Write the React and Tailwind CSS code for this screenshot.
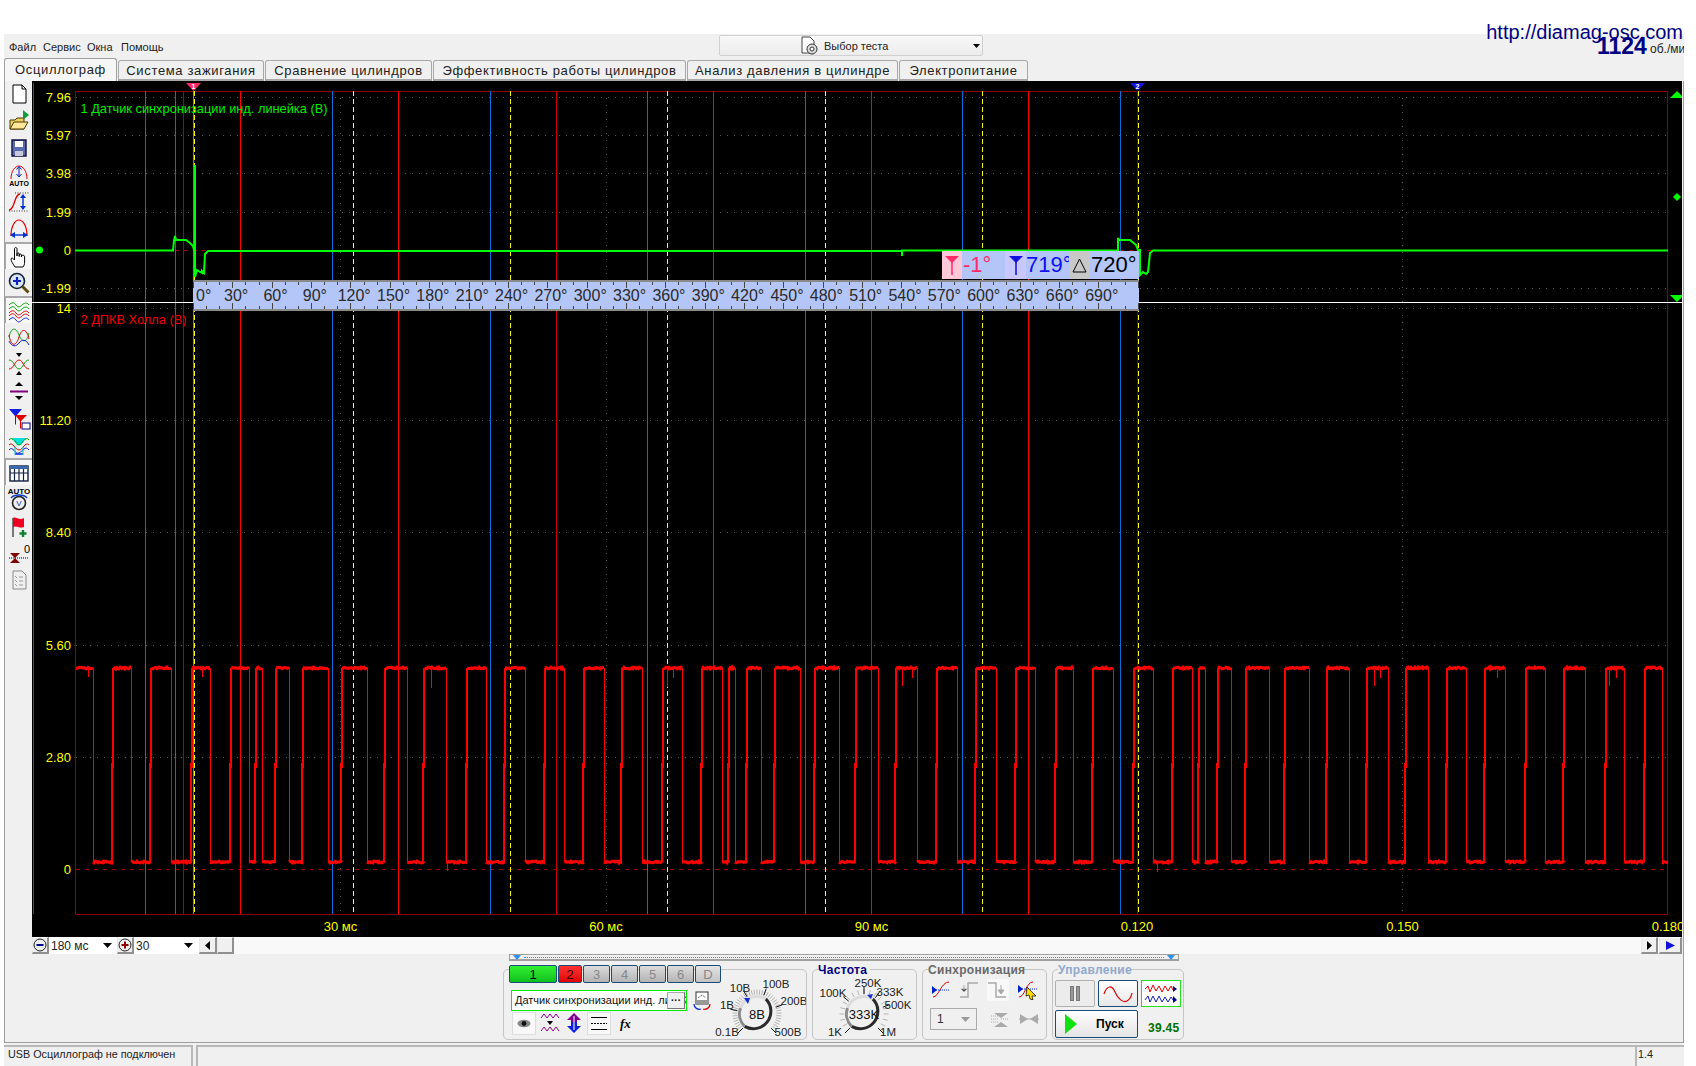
import React from "react";

const rnd = (s) => { const x = Math.sin(s * 12.9898) * 43758.5453; return x - Math.floor(x); };
const EDGES = [92.7,113,131,150.7,170.7,191.7,210,230.7,249,256,262,275.7,288.7,303,328,342,367,385,406.7,424,445.5,466.7,485.7,504.7,524.7,545,563.7,584.3,603.7,622,642.3,663,681.7,702.3,721.7,728.7,734.7,747,760.7,774.7,799.7,814.7,838.7,856,877.7,896,916.7,937,956.7,976,995.6,1016,1035,1056,1073,1093,1112.5,1133.5,1152.5,1172.5,1191.6,1198.6,1204.7,1217.7,1230.7,1245.6,1269.4,1285,1309,1327,1348.5,1367,1387.6,1406,1427.6,1447,1466,1485,1505,1526,1544.5,1563.6,1584.5,1606,1623.6,1644.6,1662].map(Math.round);
const SPIKES = [[88,677],[202,677],[431,688],[667,687],[673,678],[902,686],[912,678],[1374,686],[1380,678],[1497,678],[1609,686],[1616,678]];
const HI = 668, LO = 862;

function redWave() {
  let flat = "", fall = "", rise = "";
  let x0 = 76, high = true;
  const seg = (a, b, base, seed) => {
    let d = `M${a} ${base}`;
    for (let x = a + 1; x <= b; x += 1) d += `L${x} ${(base + (rnd(x + seed) - 0.5) * 1.8).toFixed(1)}`;
    return d;
  };
  EDGES.forEach((e) => {
    flat += seg(x0, e, high ? HI : LO, high ? 3 : 7);
    if (high) fall += `M${e + 0.5} ${HI}V${LO}`;
    else rise += `M${e - 1} ${LO}V${HI + 95}M${e} ${HI + 100}V${HI}`;
    x0 = e; high = !high;
  });
  flat += seg(x0, 1668, LO, 7);
  const sp = SPIKES.map(([x, y]) => `M${x + 0.5} ${HI}V${y}`).join("") + "M447.5 862V871M1157.5 862V872";
  return { flat, fall, rise, sp };
}
const W = redWave();

const GREEN = "M75 250.5H173L174 241L175 236L176 240H186L190 243L193 246L194 250H195V165V277L197 270L200 272L202 273V271L204 273L205 254L208 251H902V256V250.5H1118V238L1119 240H1130L1136 245L1138 250H1140V275L1143 272L1146 274L1148 272L1150 253L1153 250.5H1668";

const range = (a, s, n) => Array.from({ length: n }, (_, i) => a + s * i);
const BLUE = [144.5, ...range(174.6, 157.55, 7)];
const RED = range(240.4, 157.55, 6);
const YEL = range(352.5, 157.4, 5);
const DOT = [340.5, 606, 871.5, 1402.5];
const Y1 = [[97,"7.96"],[135,"5.97"],[173,"3.98"],[212,"1.99"],[288,"-1.99"]];
const Y2 = [[420,"11.20"],[532,"8.40"],[645,"5.60"],[757,"2.80"]];
const XL = [[340.5,"30 мс"],[606,"60 мс"],[871.5,"90 мс"],[1137,"0.120"],[1402.5,"0.150"],[1668,"0.180"]];

function Scope() {
  return (
    <svg className="block" width="1650" height="856" viewBox="32 81 1650 856">
      <rect x="32" y="81" width="1650" height="856" fill="#000" />
      <g shapeRendering="crispEdges" fill="none">
        {[...Y1, [308], ...Y2].map(([y]) => <path key={y} d={`M76 ${y + 0.5}H1668`} stroke="#5a5a5a" strokeDasharray="1 6" />)}
        {DOT.map((x) => <path key={x} d={`M${x} 91V914`} stroke="#5a5a5a" strokeDasharray="1 6" />)}
        <path d="M76 250.5H1668M76 869.5H1668" stroke="#a00000" strokeDasharray="4 5" />
        <rect x="75.5" y="91.5" width="1592" height="822.5" stroke="#8f0000" />
        <path d="M33.5 83V914" stroke="#ff0000" />
        <path d="M183.5 91V914" stroke="#b00000" />
        {BLUE.map((x) => <path key={x} d={`M${Math.round(x) + 0.5} 91V914`} stroke="#0a6fd8" />)}
        {RED.map((x, i) => <path key={x} d={`M${Math.round(x) + 0.5} 91V914`} stroke={i === 2 ? "#c80000" : "#ff0000"} />)}
        {YEL.map((x) => <path key={x} d={`M${Math.round(x) + 0.5} 91V914`} stroke="#ffff00" strokeDasharray="5 3" />)}
        <path d="M193.5 91V914" stroke="#ff3c8c" />
        <path d="M194.5 91V914" stroke="#ffff00" strokeDasharray="5 3" />
        <path d="M1137.5 91V914" stroke="#1010ff" />
        <path d="M1138.5 91V914" stroke="#ffff00" strokeDasharray="5 3" />
        <path d="M32 302.5H1682" stroke="#ffffff" />
      </g>
      <path d={GREEN} fill="none" stroke="#00ff00" strokeWidth="2" />
      <g fill="none" stroke="#ff0000">
        <path d={W.flat} strokeWidth="3" />
        <path d={W.fall} strokeWidth="1" shapeRendering="crispEdges" />
        <path d={W.rise} strokeWidth="2" shapeRendering="crispEdges" />
        <path d={W.sp} strokeWidth="1" shapeRendering="crispEdges" />
      </g>
      <circle cx="39.5" cy="250" r="3.5" fill="#00ff00" />
      <g fontSize="13" fill="#ffff00" textAnchor="end">
        {[...Y1, [250, "0"], [308, "14"], ...Y2, [869, "0"]].map(([y, t]) => <text key={y} x="71" y={y + 5}>{t}</text>)}
      </g>
      <g fontSize="13" fill="#ffff00" textAnchor="middle">
        {XL.map(([x, t]) => <text key={x} x={x} y="931">{t}</text>)}
      </g>
      <text x="80.5" y="113" fontSize="12.8" fill="#00ee00">1 Датчик синхронизации инд. линейка (В)</text>
      <text x="80.5" y="324" fontSize="12.8" fill="#f00000">2 ДПКВ Холла (В)</text>
      <path d="M186 83H201L193.5 91Z" fill="#ff2a68" />
      <text x="193.5" y="89" fontSize="7" fontWeight="700" fill="#fff" textAnchor="middle">1</text>
      <path d="M1130 83H1145L1137.5 91Z" fill="#1414e0" />
      <text x="1137.5" y="89" fontSize="7" fontWeight="700" fill="#fff" textAnchor="middle">2</text>
      <path d="M1677 91L1684 98H1670ZM1677 193L1681 197L1677 201L1673 197ZM1670 295H1684L1677 302Z" fill="#00ff00" />
    </svg>
  );
}

const RULER = ["30°","60°","90°","120°","150°","180°","210°","240°","270°","300°","330°","360°","390°","420°","450°","480°","510°","540°","570°","600°","630°","660°","690°"];

function Ruler() {
  const ticks = range(0, 13.12, 73);
  return (
    <div className="absolute left-[161px] top-[199px] w-[946px] h-[31px] bg-[#b3c6f7] border-y-2 border-[#8a8a8a] overflow-hidden">
      <svg className="absolute left-0 top-0" width="946" height="27" shapeRendering="crispEdges">
        {ticks.map((x, i) => {
          const h = i % 3 === 0 ? 6 : 3;
          return <path key={i} d={`M${Math.round(x) + 0.5} 0V${h}M${Math.round(x) + 0.5} 27V${27 - h}`} stroke="#444" fill="none" />;
        })}
      </svg>
      <div className="relative flex h-full items-center text-[16px] text-[#2a2a2a] leading-none">
        <div className="w-[23.5px] shrink-0 pl-[3px]">0°</div>
        {RULER.map((t) => <div key={t} className="w-[39.35px] shrink-0 text-center">{t}</div>)}
      </div>
    </div>
  );
}

const Marker = ({ c }) => (
  <svg width="16" height="20" viewBox="0 0 16 20"><path d="M1 1H15L8 8Z" fill={c} /><path d="M8 4V20" stroke={c} strokeWidth="1.5" /></svg>
);

function AngleBox() {
  return (
    <div className="absolute left-[910px] top-[170px] w-[197px] h-[28px] flex bg-[#b3c6f7] text-[22px] leading-none overflow-hidden">
      <div className="w-[20px] flex items-center justify-center bg-[#ffc8d8]"><Marker c="#ff2a68" /></div>
      <div className="w-[43px] flex items-center pl-[1px] text-[#ff2a68]">-1°</div>
      <div className="w-[21px] flex items-center justify-center bg-[#c8c8ff]"><Marker c="#1010e0" /></div>
      <div className="w-[43px] flex items-center overflow-hidden text-[#1010f0]">719°</div>
      <div className="w-[21px] flex items-center justify-center bg-[#c8c8c8]">
        <svg width="15" height="16" viewBox="0 0 15 16"><path d="M7.5 2L14 15H1Z" fill="none" stroke="#000" /></svg>
      </div>
      <div className="flex-1 flex items-center pl-[1px] text-black">720°</div>
    </div>
  );
}

const S = ({ children, w = 24 }) => <svg width={w} height="24" viewBox={`0 0 ${w} 24`} fill="none">{children}</svg>;
const TOOLS = [
  { i: <S><path d="M6 3H15L19 7V21H6Z" fill="#fff" stroke="#000" /><path d="M15 3V7H19" stroke="#000" /></S> },
  { i: <S><path d="M3 11H8L10 9H17V20H3Z" fill="#f0cf60" stroke="#4a3a00" /><path d="M3 20L7 13H21L17 20Z" fill="#ffe79a" stroke="#4a3a00" /><path d="M16 1L22 6L16 11Z" fill="#129a3c" /></S> },
  { i: <S><path d="M5 4H19V20H5Z" fill="#5a6bb0" stroke="#101040" strokeWidth="1.4" /><path d="M8 5H16V11H8Z" fill="#fff" /><path d="M8 15H16V20H8Z" fill="#c8c8d8" /></S> },
  { i: <S><path d="M4 16C4 8 8 3 12 3S20 8 20 16" stroke="#e00000" /><path d="M12 4V13M9.5 6.5L12 3.5L14.5 6.5M9.5 11L12 14L14.5 11" stroke="#0020c0" /><text x="12" y="22.5" fontSize="7" fontWeight="700" fill="#000" textAnchor="middle">AUTO</text></S> },
  { i: <S><path d="M2 20C8 20 7 4 13 4" stroke="#e00000" strokeWidth="1.3" /><path d="M8 3H22M2 21H22" stroke="#333" strokeDasharray="1 1.5" /><path d="M16 5V19" stroke="#0030d0" strokeWidth="1.4" /><path d="M13 8L16 4L19 8ZM13 16L16 20L19 16Z" fill="#0030d0" /></S> },
  { i: <S><path d="M4 19C4 9 8 3 12 3S20 9 20 19" stroke="#e00000" strokeWidth="1.2" /><path d="M6 18H18" stroke="#0030d0" strokeWidth="1.4" /><path d="M8 15L3 18L8 21ZM16 15L21 18L16 21Z" fill="#0030d0" /></S> },
  { sel: 1, i: <S><path d="M8 22C6 19 4 16 4 14C4.5 12.5 6 13 7.5 15V4C7.5 2 10 2 10 4V11V9C10 7.5 12.2 7.5 12.2 9V11.5V10C12.2 8.6 14.4 8.6 14.4 10V12V11C14.4 9.8 17.6 10 17.6 11.4V17C17.6 19 17 21 16 22Z" fill="#fff" stroke="#000" /></S> },
  { i: <S><circle cx="10" cy="10" r="7.5" fill="#d6e6f5" stroke="#123" strokeWidth="1.6" /><path d="M6 10H14M10 6V14" stroke="#1020c0" strokeWidth="2.2" /><path d="M15.5 15.5L21.5 21.5" stroke="#5a4a10" strokeWidth="3" /></S> },
  { sel: 1, i: <S><path d="M2 6C5 3 7 3 9 6S13 8 15 6S20 3 22 6" stroke="#00a000" /><path d="M2 10C5 7 7 7 9 10S13 12 15 10S20 7 22 10" stroke="#00a000" /><path d="M2 14C5 11 7 11 9 14S13 16 15 14S20 11 22 14" stroke="#e00000" /><path d="M2 17C5 14 7 14 9 17S13 19 15 17S20 14 22 17" stroke="#e00000" /><path d="M2 21C5 18 7 18 9 21S13 23 15 21S20 18 22 21" stroke="#1020e0" /></S> },
  { i: <S><path d="M2 12C4 2 9 2 12 10S20 18 22 8" stroke="#00a000" /><path d="M2 10C4 22 9 22 12 12S20 4 22 14" stroke="#e00000" /><path d="M2 16C5 22 9 22 12 18S19 14 22 20" stroke="#1020e0" /></S> },
  { i: <S><path d="M2 8C7 8 8 17 12 17S17 8 22 8" stroke="#00a000" /><path d="M2 17C7 17 8 8 12 8S17 17 22 17" stroke="#e00000" /><path d="M9 1H15L12 5ZM9 23H15L12 19Z" fill="#000" /></S> },
  { i: <S><path d="M8 7L12 3L16 7Z" fill="#000" /><path d="M3 12.5H21" stroke="#800080" strokeWidth="2" /><path d="M8 17H16L12 21Z" fill="#000" /></S> },
  { i: <S><path d="M2 3H15L9 10V19L8 18V10Z" fill="#1020e0" /><path d="M8 9H20L14 15V23L13 22V15Z" fill="#e00000" /><rect x="15" y="17" width="8" height="6" fill="#fff" stroke="#000080" /></S> },
  { i: <S><path d="M5 5H19L14 12H10Z" fill="#00e0e0" /><path d="M2 7C6 2 9 12 12 12S18 2 22 7" stroke="#00a000" /><path d="M2 12C6 8 8 17 12 17S18 8 22 12" stroke="#e00000" /><path d="M2 17C6 12 8 22 12 20S18 12 22 17" stroke="#1020e0" /><path d="M8 21H16" stroke="#1020e0" strokeWidth="1.5" /><path d="M8 14V22M16 14V22" stroke="#00c0c0" /></S> },
  { sel: 1, i: <svg width="20" height="18" viewBox="0 0 20 18"><rect x="1" y="2" width="18" height="15" fill="#fff" stroke="#102040" strokeWidth="1.4" /><rect x="1" y="2" width="18" height="3" fill="#3a68b0" /><path d="M1 9H19M5.5 5V17M10 5V17M14.5 5V17" stroke="#102040" strokeWidth="1.2" /></svg> },
  { i: <S><text x="12" y="7" fontSize="8" fontWeight="700" fill="#000" textAnchor="middle">AUTO</text><path d="M4 11C7 7 17 7 20 11" stroke="#1040d0" strokeWidth="1.3" /><circle cx="12" cy="16" r="6.5" fill="#eee" stroke="#222" strokeWidth="1.6" /><text x="12" y="19" fontSize="8" fill="#1030c0" textAnchor="middle">V</text></S> },
  { i: <S><path d="M6 4V23" stroke="#000" /><path d="M6 4C9 2 12 7 17 4V13C12 15 10 11 6 13Z" fill="#ee0020" /><path d="M16 16V23M12.5 19.5H19.5" stroke="#108030" strokeWidth="2.4" /></S> },
  { i: <S><path d="M3 12L13 12L8 17ZM3 22L13 22L8 17Z" fill="#800000" /><path d="M2 17H22" stroke="#000" strokeDasharray="1 1" /><text x="20" y="12" fontSize="11" fill="#000" textAnchor="middle">0</text></S> },
  { i: <S><path d="M6 3H15L19 7V21H6Z" fill="#f0f0f0" stroke="#8a8a8a" /><path d="M8 8L10 10M8 12L10 14M8 16L10 18M12 9H16M12 13H16M12 17H16" stroke="#9a9a9a" /></S> },
];

function Toolbar() {
  return (
    <div className="w-[27px] shrink-0 flex flex-col -mt-[1px]">
      {TOOLS.map((t, i) => (
        <div key={i} className={`h-[27px] flex items-center justify-center ${t.sel ? "bg-[#f8f8f8] border-t-2 border-l border-[#a8a8a8]" : ""}`}>{t.i}</div>
      ))}
    </div>
  );
}

const TABS = [["Система зажигания",146],["Сравнение цилиндров",167],["Эффективность работы цилиндров",253],["Анализ давления в цилиндре",211],["Электропитание",129]];

function Tabs() {
  return (
    <div className="h-[21px] flex items-end text-[13px] tracking-[0.65px] text-[#222]">
      <div className="w-[113px] h-[23px] -mt-[2px] bg-[#f6f6f6] border border-b-0 border-[#a0a0a0] rounded-t-[3px] flex items-center justify-center relative z-10 shrink-0">Осциллограф</div>
      {TABS.map(([t, w]) => (
        <div key={t} style={{ width: w }} className="h-[21px] ml-[1px] pt-[2px] shrink-0 bg-[#f0f0f0] border border-b-2 border-[#a8a8a8] rounded-t-[3px] flex items-center justify-center whitespace-nowrap">{t}</div>
      ))}
    </div>
  );
}

const SBtn = ({ children, className = "", w = 16 }) => (
  <div style={{ width: w }} className={`h-[17px] shrink-0 bg-[#f0f0f0] border-r-2 border-b-2 border-[#909090] border-l border-t border-l-[#e8e8e8] border-t-[#fff] flex items-center justify-center ${className}`}>{children}</div>
);
const Caret = () => <svg width="9" height="5" viewBox="0 0 9 5"><path d="M0 0H9L4.5 5Z" fill="#000" /></svg>;

function ScrollRow() {
  return (
    <div className="h-[17px] flex bg-white text-[12px] text-[#222] leading-none">
      <SBtn w={17}><svg width="14" height="14" viewBox="0 0 14 14"><circle cx="7" cy="7" r="6" fill="#eee" stroke="#222" /><path d="M3.5 7H10.5" stroke="#000090" strokeWidth="2" /></svg></SBtn>
      <div className="w-[68px] flex items-center justify-between pl-[2px] pr-[5px]"><span>180 мс</span><Caret /></div>
      <SBtn w={17}><svg width="14" height="14" viewBox="0 0 14 14"><circle cx="7" cy="7" r="6" fill="#eee" stroke="#222" /><path d="M3.5 7H10.5M7 3.5V10.5" stroke="#900000" strokeWidth="2" /></svg></SBtn>
      <div className="w-[65px] flex items-center justify-between pl-[2px] pr-[6px]"><span>30</span><Caret /></div>
      <SBtn w={18}><svg width="5" height="9" viewBox="0 0 5 9"><path d="M5 0V9L0 4.5Z" fill="#000" /></svg></SBtn>
      <SBtn w={17} />
      <div className="flex-1 bg-[#f9f9f9]" />
      <SBtn w={17}><svg width="5" height="9" viewBox="0 0 5 9"><path d="M0 0V9L5 4.5Z" fill="#000" /></svg></SBtn>
      <div className="w-[1px]" />
      <SBtn w={23}><svg width="9" height="9" viewBox="0 0 9 9"><path d="M0 0V9L9 4.5Z" fill="#1010e0" /></svg></SBtn>
    </div>
  );
}

function Knob({ x, y, vb, labels, center, ticks }) {
  const pt = (a, r) => [x + Math.cos(a * Math.PI / 180) * r, y + Math.sin(a * Math.PI / 180) * r];
  const marks = range(135, 270 / ticks, ticks + 1);
  const arc = (a, b) => { const [x1, y1] = pt(a, 17.5); const [x2, y2] = pt(b, 17.5); return `M${x1} ${y1}A17.5 17.5 0 0 1 ${x2} ${y2}`; };
  return (
    <svg width={vb[2]} height={vb[3]} viewBox={vb.join(" ")} className="block shrink-0">
      {marks.map((a, i) => {
        const [a1, b1] = pt(a, 19.5); const [a2, b2] = pt(a, 24.5);
        return <path key={i} d={`M${a1} ${b1}L${a2} ${b2}`} stroke="#b4b4b4" />;
      })}
      <path d={arc(-60, 135)} fill="none" stroke="#2a2a2a" strokeWidth="3" />
      <path d={arc(135, 200)} fill="none" stroke="#8a8a8a" strokeWidth="3" />
      <path d={arc(200, 300)} fill="none" stroke="#dcdcdc" strokeWidth="3" />
      {labels.map(([lx, ly, t, a]) => {
        const [a1, b1] = pt(a, 20); const [a2, b2] = pt(a, 27);
        return (
          <g key={t}>
            <path d={`M${a1} ${b1}L${a2} ${b2}`} stroke="#111" />
            <text x={lx} y={ly} fontSize="11.5" fill="#222" textAnchor="middle">{t}</text>
          </g>
        );
      })}
      <text x={x} y={y + 5} fontSize="13" fill="#111" textAnchor="middle">{center}</text>
      <path d={center === "8В" ? `M${x - 13} ${y - 16}h6l-2 6z` : `M${x + 3} ${y - 19}l6 -1l-2 5z`} fill="#1030e0" />
    </svg>
  );
}

const GBox = ({ w, title, tc, children, tw }) => (
  <div style={{ width: w }} className="relative h-[71px] shrink-0 border border-[#c4c4c4] rounded-[5px]">
    {title && <div style={{ width: tw }} className={`absolute left-[5px] -top-[6px] h-[13px] leading-[13px] bg-[#f0f0f0] text-[12px] font-bold tracking-[0.3px] whitespace-nowrap ${tc}`}>{title}</div>}
    {children}
  </div>
);

const CH = [["1",48,"bg-linear-to-b from-[#30f030] to-[#10c020] text-black"],["2",24,"bg-linear-to-b from-[#ff3030] to-[#e00000] text-[#300]"],["3",27,"bg-linear-to-b from-[#dcdcdc] to-[#b4b4b4] text-[#888]"],["4",27,"bg-linear-to-b from-[#dcdcdc] to-[#b4b4b4] text-[#888]"],["5",27,"bg-linear-to-b from-[#dcdcdc] to-[#b4b4b4] text-[#888]"],["6",27,"bg-linear-to-b from-[#dcdcdc] to-[#b4b4b4] text-[#888]"],["D",26,"bg-linear-to-b from-[#e4e4e4] to-[#c4c4c4] text-[#888]"]];

function ChannelGroup() {
  return (
    <GBox w={304}>
      <div className="flex h-full">
        <div className="w-[208px] shrink-0 pl-[5px] -mt-[5px]">
          <div className="flex gap-[1px] h-[18px]">
            {CH.map(([t, w, c]) => <div key={t} style={{ width: w }} className={`border border-[#1a4a78] rounded-[2px] shrink-0 flex items-center justify-center text-[13px] leading-none ${c}`}>{t}</div>)}
          </div>
          <div className="flex items-center mt-[7px] h-[21px] w-[220px]">
            <div className="w-[176px] ml-[2px] h-[21px] shrink-0 border border-[#00f000] bg-white flex items-center text-[11px] leading-none text-[#111] pl-[3px] overflow-hidden relative whitespace-nowrap">
              Датчик синхронизации инд. линейка (В)
              <div className="absolute right-[1px] top-[1px] w-[18px] h-[17px] bg-[#f0f0f0] border border-[#aaa] border-r-[#777] border-b-[#777] flex items-center justify-center text-[10px] font-bold">···</div>
            </div>
            <svg width="18" height="20" viewBox="0 0 18 20" className="ml-[6px] shrink-0"><rect x="3" y="1" width="12" height="12" fill="#fff" stroke="#333" /><path d="M3 9H15V13H3Z" fill="#999" /><path d="M5 7L9 4L13 7" stroke="#333" fill="none" strokeDasharray="1 1" /><path d="M1 13C1 17 5 19 8 18" stroke="#1030e0" fill="none" strokeWidth="1.3" /><path d="M17 13C17 17 13 19 10 18" stroke="#e00000" fill="none" strokeWidth="1.3" /></svg>
          </div>
          <div className="flex items-center h-[24px] pl-[3px] w-[210px]">
            <div className="w-[24px] h-[23px] bg-[#f8f8f8] border border-[#ddd] flex items-center justify-center"><svg width="14" height="9" viewBox="0 0 14 9"><ellipse cx="7" cy="4.5" rx="6.5" ry="3.8" fill="#888" /><circle cx="7" cy="4.5" r="2.4" fill="#111" /></svg></div>
            <svg width="20" height="22" viewBox="0 0 20 22" className="ml-[4px]"><path d="M1 6L4 2L7 6L10 2L13 6L16 2L19 6" stroke="#900090" fill="none" /><path d="M1 19L4 15L7 19L10 15L13 19L16 15L19 19" stroke="#900090" fill="none" /><path d="M7 9H13L10 13Z" fill="#000" /></svg>
            <svg width="16" height="22" viewBox="0 0 16 22" className="ml-[6px]"><path d="M8 1L15 8H11V12H5V8H1Z" fill="#800090" /><path d="M8 21L1 14H5V10H11V14H15Z" fill="#1020e0" /><path d="M8 4V18" stroke="#fff" /></svg>
            <div className="ml-[5px] w-[24px] h-[23px] bg-[#f8f8f8] border border-[#ddd] flex items-center justify-center"><svg width="18" height="15" viewBox="0 0 18 15"><path d="M1 1.5H17M1 13.5H17" stroke="#000" /><path d="M1 7.5H17" stroke="#000" strokeDasharray="2 1" /></svg></div>
            <span className="ml-[9px] text-[13px] font-bold italic [font-family:'Liberation_Serif',serif] leading-none">fx</span>
          </div>
        </div>
        <Knob x={757} y={1014} vb={[712, 970, 94, 69]} center="8В" ticks={40}
          labels={[[740,992,"10В",240],[776,988,"100В",290],[727,1009,"1В",190],[794,1005,"200В",-20],[727,1036,"0.1В",135],[788,1036,"500В",45]]} />
      </div>
    </GBox>
  );
}

function SyncGroup() {
  return (
    <GBox w={125} title="Синхронизация" tc="text-[#6a6a6a]" tw={95}>
      <div className="flex items-center pl-[8px] pt-[10px] h-[30px]">
        <svg width="20" height="18" viewBox="0 0 20 18"><path d="M2 16C8 16 10 1 18 1" stroke="#e00000" fill="none" /><path d="M5 9H19" stroke="#0020d0" strokeDasharray="1 1" /><path d="M1 5L6 9L1 13Z" fill="#0020d0" /></svg>
        <svg width="20" height="16" viewBox="0 0 20 16" className="ml-[9px]"><path d="M0 15H8V1H18" stroke="#a8a8a8" fill="none" strokeWidth="1.5" /><path d="M4 10L1 7H7ZM4 3V9" stroke="#a8a8a8" /></svg>
        <div className="ml-[7px] w-[22px] h-[22px] bg-[#f8f8f8] flex items-center justify-center"><svg width="20" height="16" viewBox="0 0 20 16"><path d="M0 1H8V15H18" stroke="#a8a8a8" fill="none" strokeWidth="1.5" /><path d="M13 3V10M10 8H16L13 12Z" fill="#a8a8a8" stroke="#a8a8a8" /></svg></div>
        <svg width="22" height="20" viewBox="0 0 22 20" className="ml-[8px]"><path d="M2 17C8 17 9 2 16 2" stroke="#e00000" fill="none" /><path d="M5 9H20" stroke="#0020d0" strokeDasharray="1 1" /><path d="M1 5L6 9L1 13Z" fill="#0020d0" /><path d="M10 7L19 16H15L16 20L13 19L12 15L9 16Z" fill="#ffd800" stroke="#000" strokeWidth="0.7" /></svg>
      </div>
      <div className="flex items-center pl-[7px] mt-[8px]">
        <div className="w-[47px] h-[22px] border border-[#aaa] flex items-center justify-between pl-[6px] pr-[6px] text-[12px] text-[#333]"><span>1</span><svg width="9" height="5" viewBox="0 0 9 5"><path d="M0 0H9L4.5 5Z" fill="#999" /></svg></div>
        <svg width="20" height="18" viewBox="0 0 20 18" className="ml-[14px]"><path d="M3 3H17L10 8ZM3 17H17L10 12Z" fill="#aaa" /><path d="M0 6H8M0 9H8M0 12H8M10 9H18" stroke="#aaa" strokeDasharray="1 1" /></svg>
        <svg width="20" height="12" viewBox="0 0 20 12" className="ml-[8px]"><path d="M1 1L9 6L1 11ZM19 1L11 6L19 11Z" fill="#aaa" /><path d="M0 6H20" stroke="#aaa" /></svg>
      </div>
    </GBox>
  );
}

function ControlGroup() {
  return (
    <GBox w={132} title="Управление" tc="text-[#8fa8cc]" tw={72}>
      <div className="flex pl-[2px] pt-[10px] gap-[3px]">
        <div className="w-[40px] h-[27px] border border-[#b0b0b0] rounded-[2px] bg-[#ececec] flex items-center justify-center gap-[2px]"><div className="w-[4px] h-[15px] bg-[#999] border border-[#777]" /><div className="w-[4px] h-[15px] bg-[#999] border border-[#777]" /></div>
        <div className="w-[40px] h-[27px] border border-[#1a4a78] rounded-[2px] bg-linear-to-b from-[#fff] to-[#e8e8e8] flex items-center justify-center"><svg width="30" height="20" viewBox="0 0 30 20"><path d="M1 10C4 1 9 1 12 8S20 19 24 17S28 12 29 9" stroke="#e00000" fill="none" strokeWidth="1.2" /></svg></div>
        <div className="w-[40px] h-[27px] border border-[#20e020] bg-white flex items-center justify-center"><svg width="34" height="22" viewBox="0 0 34 22"><path d="M1 6L4 3L6 9L9 2L12 8L15 3L18 9L21 3L24 8L27 3L29 7" stroke="#e00000" fill="none" /><path d="M29 3L33 6L29 9Z" fill="#000080" /><path d="M1 17L4 13L6 19L9 13L12 19L15 13L18 19L21 14L24 19L27 14L29 17" stroke="#1020c0" fill="none" /><path d="M29 13L33 17L29 20Z" fill="#000080" /></svg></div>
      </div>
      <div className="flex items-center pl-[2px] mt-[3px]">
        <div className="w-[83px] h-[28px] border border-[#1a4a78] rounded-[2px] bg-linear-to-b from-[#fff] to-[#e4e4e4] flex items-center pl-[9px] text-[12px] font-bold text-black">
          <svg width="12" height="20" viewBox="0 0 12 20"><path d="M0 0L12 10L0 20Z" fill="#10e010" /></svg>
          <span className="ml-[19px]">Пуск</span>
        </div>
        <div className="ml-[10px] mt-[8px] text-[12px] font-bold text-[#007000] tracking-[0.3px]">39.45</div>
      </div>
    </GBox>
  );
}

function FreqGroup() {
  return (
    <GBox w={105} title="Частота" tc="text-[#000080]" tw={52}>
      <Knob x={864} y={1014} vb={[813, 970, 103, 69]} center="333K" ticks={18}
        labels={[[833,997,"100K",220],[868,987,"250K",270],[890,996,"333K",305],[898,1009,"500K",-20],[835,1036,"1K",135],[888,1036,"1M",45]]} />
    </GBox>
  );
}

export default function App() {
  return (
    <div className="relative w-[1696px] h-[1066px] bg-white overflow-hidden [font-family:'Liberation_Sans',sans-serif]">
      <div className="h-[34px]" />
      <div className="ml-[4px] w-[1680px] h-[1032px] bg-[#f0f0f0] flex flex-col">
        <div className="h-[26px] flex items-center text-[11px] text-[#222] pl-[5px] shrink-0">
          <span className="w-[34px]">Файл</span>
          <span className="w-[44px]">Сервис</span>
          <span className="w-[34px]">Окна</span>
          <span className="w-[42px]">Помощь</span>
          <div className="ml-[556px] w-[264px] h-[21px] -mt-[3px] border border-[#d0d0d0] rounded-[2px] bg-linear-to-b from-[#f8f8f8] to-[#ececec] flex items-center pl-[79px] pr-[2px]">
            <svg width="22" height="20" viewBox="0 0 22 20"><path d="M3 1H11L15 5V17H3Z" fill="#fff" stroke="#444" /><circle cx="13" cy="13" r="5" fill="#ddd" stroke="#333" /><circle cx="13" cy="13" r="2" fill="#fff" stroke="#333" /></svg>
            <span className="ml-[3px] pt-[1px]">Выбор теста</span>
            <svg className="ml-auto" width="7" height="4" viewBox="0 0 7 4"><path d="M0 0H7L3.5 4Z" fill="#000" /></svg>
          </div>
        </div>
        <Tabs />
        <div className="flex-1 flex flex-col border-l border-r border-b border-[#a0a0a0]">
          <div className="flex flex-1">
            <Toolbar />
            <div className="w-[1650px] shrink-0">
              <div className="relative h-[856px]">
                <Scope />
                <Ruler />
                <AngleBox />
              </div>
              <ScrollRow />
            </div>
          </div>
          <div className="h-[88px] shrink-0">
            <div className="ml-[504px] w-[670px] h-[7px] border border-[#a0a0a0] border-b-2 flex items-center px-[3px]">
              <svg width="8" height="5" viewBox="0 0 8 5" className="shrink-0"><path d="M0 0H8L4 5Z" fill="#3090f0" /></svg>
              <div className="flex-1 mx-[3px] border-t border-dotted border-[#3090f0]" />
              <svg width="8" height="5" viewBox="0 0 8 5" className="shrink-0"><path d="M0 0H8L4 5Z" fill="#3090f0" /></svg>
            </div>
            <div className="flex ml-[498px] mt-[8px] gap-[5px]">
              <ChannelGroup />
              <FreqGroup />
              <SyncGroup />
              <ControlGroup />
            </div>
          </div>
        </div>
        <div className="h-[21px] mt-[2px] flex text-[10.8px] text-[#222] shrink-0">
          <div className="w-[189px] border-t-2 border-r-2 border-[#b8b8b8] pl-[4px] pb-[4px] flex items-center leading-none">USB Осциллограф не подключен</div>
          <div className="ml-[3px] w-[1439px] border-t-2 border-l-2 border-[#b8b8b8]" />
          <div className="flex-1 border-t-2 border-l-2 border-[#b8b8b8] pl-[1px] pb-[4px] flex items-center">1.4</div>
        </div>
      </div>
      <div className="absolute right-[13px] top-[20px] text-[20px] leading-[24px] text-[#000080] whitespace-nowrap">http://diamag-osc.com</div>
      <div className="absolute left-[1597px] top-[33px] text-[23px] leading-[26px] font-bold text-[#000080]">1124</div>
      <div className="absolute left-[1650px] w-[34px] top-[41px] text-[12px] leading-[16px] text-[#222] overflow-hidden whitespace-nowrap">об./мин</div>
    </div>
  );
}
